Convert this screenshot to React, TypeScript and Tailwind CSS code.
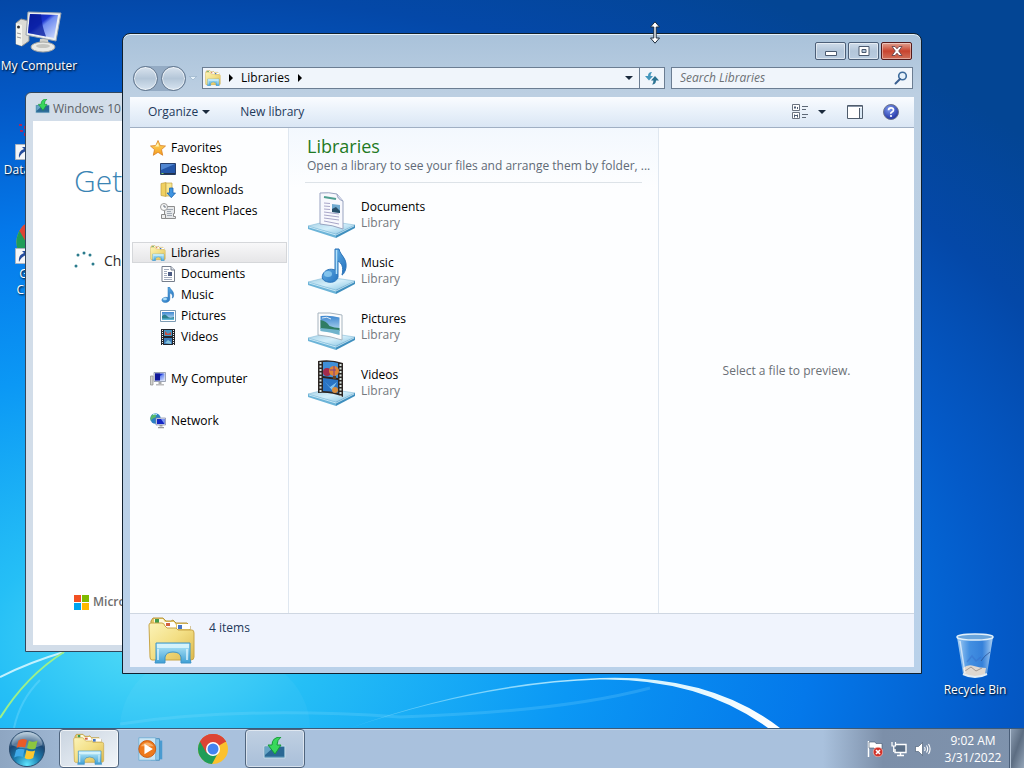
import { useState } from "react";
import type { ReactNode } from "react";

type IconProps = { className?: string };

// Shared gradients, referenced by id from the icons below
const Gradients = () => (
  <svg className="absolute w-0 h-0" aria-hidden="true">
    <defs>
      <linearGradient id="folder" x1="0" y1="0" x2="1" y2="1">
        <stop offset="0" stopColor="#fbf3b8" />
        <stop offset="0.5" stopColor="#f3df85" />
        <stop offset="1" stopColor="#dcb84c" />
      </linearGradient>
      <linearGradient id="stand" x1="0" y1="0" x2="0" y2="1">
        <stop offset="0" stopColor="#b9ecfb" />
        <stop offset="1" stopColor="#3f9fd4" />
      </linearGradient>
      <linearGradient id="tray" x1="0" y1="0" x2="1" y2="1">
        <stop offset="0" stopColor="#a2cfe4" />
        <stop offset="0.5" stopColor="#d3eefa" />
        <stop offset="1" stopColor="#7fbfdf" />
      </linearGradient>
      <linearGradient id="screen" x1="0" y1="0" x2="1" y2="1">
        <stop offset="0" stopColor="#0a1a9a" />
        <stop offset="0.4" stopColor="#1b35d0" />
        <stop offset="0.5" stopColor="#6f8cf0" />
        <stop offset="1" stopColor="#d4e0ff" />
      </linearGradient>
      <linearGradient id="note" x1="0" y1="0" x2="1" y2="1">
        <stop offset="0" stopColor="#7cc6f2" />
        <stop offset="1" stopColor="#1565b8" />
      </linearGradient>
      <linearGradient id="sky" x1="0" y1="0" x2="0" y2="1">
        <stop offset="0" stopColor="#3c86cf" />
        <stop offset="1" stopColor="#d5eefa" />
      </linearGradient>
      <linearGradient id="star" x1="0" y1="0" x2="0" y2="1">
        <stop offset="0" stopColor="#ffe36b" />
        <stop offset="1" stopColor="#f59a1c" />
      </linearGradient>
      <linearGradient id="glass" x1="0" y1="0" x2="1" y2="0">
        <stop offset="0" stopColor="#c8e6fb" stopOpacity="0.85" />
        <stop offset="0.35" stopColor="#5ea4ea" stopOpacity="0.7" />
        <stop offset="0.7" stopColor="#4a90e0" stopOpacity="0.7" />
        <stop offset="1" stopColor="#cfe8fb" stopOpacity="0.85" />
      </linearGradient>
      <radialGradient id="orb" cx="0.5" cy="0.95" r="0.9">
        <stop offset="0" stopColor="#5fe6ff" />
        <stop offset="0.4" stopColor="#1d7fb0" />
        <stop offset="0.75" stopColor="#1a4673" />
        <stop offset="1" stopColor="#9ab6cc" />
      </radialGradient>
      <radialGradient id="help" cx="0.4" cy="0.3" r="0.8">
        <stop offset="0" stopColor="#7f9cf0" />
        <stop offset="1" stopColor="#14259a" />
      </radialGradient>
    </defs>
  </svg>
);

const LibrariesIcon = ({ className }: IconProps) => (
  <svg className={className} viewBox="0 0 48 48" aria-hidden="true">
    <path d="M3 5 5 2h10l3 3h5l2-1 3 3h11l3 3v33H3z" fill="#e3c766" stroke="#b8963c" />
    <path d="M6 3h9l2 3v6H6z" fill="#fdf9dc" />
    <path d="M7 3h4v4H7z" fill="#3f9a4c" />
    <path d="M17 6h9l2 3v5H17z" fill="#fff" />
    <path d="M18 7h4v3h-4z" fill="#d2603d" />
    <path d="M29 8h13v5H29z" fill="#fff" />
    <path d="M30 9h4v4h-4z" fill="#4474c4" />
    <path d="M1 9q0-2 2-2h11q2 0 3 3l2 2h9l2 2h14q2 0 2 3v24q0 3-3 3H4q-2 0-2-3z" fill="url(#folder)" stroke="#c9a649" />
    <path d="M8 27h34v16l1 4H33v-6q-1-5-8-5t-8 5v6H7l1-4z" fill="url(#stand)" stroke="#3d93c8" />
    <path d="M9 28h32v4H9z" fill="#dff6fd" opacity="0.8" />
    <path d="M10 33v11M39 33v11" stroke="#e2f7ff" strokeWidth="2" opacity="0.7" />
  </svg>
);

const MonitorIcon = ({ className }: IconProps) => (
  <svg className={className} viewBox="0 0 48 48" aria-hidden="true">
    <path d="M1 15 6 11l8 2v20l-7 5-6-2z" fill="#dcdcd6" stroke="#8e9090" />
    <path d="M1 15l6 2v21l-6-2z" fill="#f4f4ee" />
    <circle cx="3.500" cy="19" r="1.500" fill="#333" />
    <path d="M2 25l4 1M2 29l4 1" stroke="#999" />
    <path d="M25 31h8l1 8H24z" fill="#cfcfcb" />
    <ellipse cx="28" cy="39" rx="12" ry="5" fill="#e9e9e6" stroke="#a4a4a0" />
    <ellipse cx="28" cy="38" rx="7" ry="2" fill="#c4c4c0" />
    <path d="M13 4 46 5l-5 28-30-6z" fill="#eceff2" stroke="#9aa4ae" />
    <path d="M15 6 43 7l-4 23-26-5z" fill="url(#screen)" />
    <path d="M15 6l11 .500q1 12 5 22l-18-3.500z" fill="#071c9c" opacity="0.75" />
  </svg>
);

const DocumentIcon = ({ className }: IconProps) => (
  <svg className={className} viewBox="0 0 16 16" aria-hidden="true">
    <path d="M2 .5h9L14.500 4v11.500H2z" fill="#fff" stroke="#767e8c" />
    <path d="M11 .5V4h3.500" fill="#dde3ec" stroke="#767e8c" />
    <path d="M4 3.500h5M4 5.500h3M4 7.500h3M4 9.500h3M4 11.500h8M4 13.500h8" stroke="#a3acbd" />
    <path d="M8 6h4v4H8z" fill="#4c5c84" />
  </svg>
);

const MusicIcon = ({ className }: IconProps) => (
  <svg className={className} viewBox="0 0 16 16" aria-hidden="true">
    <path d="M8 0h1.500c1 3 5 4 4 9.500-.2 1-.8 1.500-1.200 1.500 1-3-.8-4.500-2.500-5V12c0 2-2 3.500-4.500 3.500S1.500 14 2 12.500 4.500 9.800 8 10.500z" fill="url(#note)" stroke="#1f6eb5" strokeWidth="0.5" />
    <ellipse cx="5" cy="12" rx="2" ry="1.200" fill="#a9dcf8" />
  </svg>
);

const PicturesIcon = ({ className }: IconProps) => (
  <svg className={className} viewBox="0 0 16 16" aria-hidden="true">
    <path d="M.5 2.500h15v11H.5z" fill="#fff" stroke="#7c9bb3" />
    <path d="M2 4h12v8H2z" fill="url(#sky)" />
    <path d="M2 8q3-3 5 0t7 1v3H2z" fill="#2b7f8c" />
    <path d="M2 10.500h12V12H2z" fill="#5fb6d8" />
  </svg>
);

const VideosIcon = ({ className }: IconProps) => (
  <svg className={className} viewBox="0 0 16 16" aria-hidden="true">
    <path d="M1 0h14v16H1z" fill="#23262c" />
    <path d="M4 1h8v6H4z" fill="#4596c4" />
    <path d="M4 9h8v6H4z" fill="#3c7cb8" />
    <path d="M5 2l3 3 3-2v3H5z" fill="#c65145" />
    <path d="M5 14l3-3 3 2v2z" fill="#88c6de" />
    <path d="M2.500 1v15M13.500 1v15" stroke="#f3f3f3" strokeDasharray="1 1" />
  </svg>
);

const ComputerSmallIcon = ({ className }: IconProps) => (
  <svg className={className} viewBox="0 0 16 16" aria-hidden="true">
    <path d="M.5 5h2.500v9H.5z" fill="#d4d4d0" stroke="#8b8b88" strokeWidth="0.7" />
    <path d="M4 1.500h11.500v9H4z" fill="#e3e6ee" stroke="#8890a4" strokeWidth="0.8" />
    <path d="M5 2.500h9.500V9.500H5z" fill="url(#screen)" />
    <path d="M5 2.500h5V9.500H5z" fill="#10179a" />
    <path d="M8.500 11h3v2h-3z" fill="#aaa" />
    <path d="M6 13h8v1.500H6z" fill="#bcbcbc" />
  </svg>
);

const NetworkIcon = ({ className }: IconProps) => (
  <svg className={className} viewBox="0 0 16 16" aria-hidden="true">
    <circle cx="5.500" cy="5.500" r="5.200" fill="#2c7fc4" />
    <path d="M2 2q3-2 4 0t-2 3-3 3Q-.5 5 2 2zM6 6q2-1 3 1l-3 3z" fill="#57b96a" />
    <path d="M3 1.500q2-1 4 0" stroke="#c2ecfa" fill="none" />
    <path d="M6 5h9.500v7H6z" fill="#dde2f2" stroke="#7c84a4" strokeWidth="0.7" />
    <path d="M7 6h7.500v5H7z" fill="#1426c4" />
    <path d="M11 6h3.500v5z" fill="#7d98f4" />
    <path d="M9.500 12h3v1.500h-3zM8 14h6v1.200H8z" fill="#9a9a9a" />
  </svg>
);

const StarIcon = ({ className }: IconProps) => (
  <svg className={className} viewBox="0 0 16 16" aria-hidden="true">
    <path d="M8 .5l2.200 5 5.300.5-4 3.600 1.200 5.700L8 12.300l-4.700 3 1.200-5.700-4-3.600 5.300-.5z" fill="url(#star)" stroke="#d98224" strokeWidth="0.8" />
    <path d="M8 3l1 3.500H5z" fill="#fff5b8" />
  </svg>
);

const DesktopIcon = ({ className }: IconProps) => (
  <svg className={className} viewBox="0 0 16 16" aria-hidden="true">
    <path d="M.5 2.500h15v11H.5z" fill="#2456a8" stroke="#28406c" />
    <path d="M1 3h14L1 9z" fill="#5c94dc" opacity="0.8" />
    <path d="M1 12h14v1.500H1z" fill="#24344c" />
    <path d="M1.500 12h2v1h-2z" fill="#7fd46c" />
  </svg>
);

const DownloadsIcon = ({ className }: IconProps) => (
  <svg className={className} viewBox="0 0 16 16" aria-hidden="true">
    <path d="M1 1.500 6 .5v14L1 13.500z" fill="#f0d060" stroke="#c3a043" strokeWidth="0.7" />
    <path d="M6 1h6v13H6z" fill="#f8e690" stroke="#c3a043" strokeWidth="0.7" />
    <path d="M9.500 6h3.500v5h2.500l-4.200 4.700L7 11h2.500z" fill="#3f94e0" stroke="#1d64b0" strokeWidth="0.8" />
  </svg>
);

const RecentIcon = ({ className }: IconProps) => (
  <svg className={className} viewBox="0 0 16 16" aria-hidden="true">
    <path d="M4.500 3.500h10v7h-1v3h2v2h-11z" fill="#e6e8ea" stroke="#8d8d8d" />
    <path d="M7 6.500h6M7 8.500h4M7 10.500h5M7 12.500h5" stroke="#a0a8b2" />
    <circle cx="4" cy="4" r="3.500" fill="#fafafa" stroke="#9b9b9b" />
    <path d="M4 2v2h2" stroke="#4a5566" fill="none" strokeWidth="0.8" />
    <path d="M1.500 11.500h4v4h-4z" fill="#ededed" stroke="#8a8a8a" />
  </svg>
);

// Glass plate under each of the large library icons
const Tray = () => (
  <>
    <path d="M0 35 20 30l27 4-19 9z" fill="url(#tray)" stroke="#86bcd8" strokeWidth="0.6" />
    <path d="M0 35l28 8v4L0 38z" fill="#6cb4d8" />
    <path d="M28 43l19-9v3l-19 10z" fill="#3f8fbe" />
    <path d="M1 36l27 8 18-9" stroke="#dff4fc" fill="none" strokeWidth="0.8" />
  </>
);

const DocumentsLarge = ({ className }: IconProps) => (
  <svg className={className} viewBox="0 0 48 48" aria-hidden="true">
    <Tray />
    <path d="M12 2q9-1 17 1l6 7v28q-10-4-23-5z" fill="#f7f8fd" stroke="#98a3c0" />
    <path d="M29 3q0 5 6 7" fill="#d6dcee" stroke="#98a3c0" />
    <path d="M16 6l12 2" stroke="#4f9f90" strokeWidth="2" />
    <path d="M16 12l6 .5M16 15l6 .5M16 18l6 .5M16 21l15 2M16 24l15 2M16 27l15 2M16 30l15 3" stroke="#a8a6c8" />
    <path d="M24 13l8 1v8l-8-1z" fill="#6fa9cf" />
    <path d="M24 18l4-2 4 4v2l-8-1z" fill="#274e68" />
  </svg>
);

const MusicLarge = ({ className }: IconProps) => (
  <svg className={className} viewBox="0 0 48 48" aria-hidden="true">
    <Tray />
    <path d="M27 2h4c1 6 8 9 7 18-.3 4-3 8-4 8 2-8-.5-12-4-14v16c-1 4-5 6-10 5s-7-4-5-8 7-6 12-4z" fill="url(#note)" stroke="#2a73b8" />
    <path d="M28.500 3v24" stroke="#b4e2fa" strokeWidth="1.500" />
    <ellipse cx="20" cy="27" rx="4" ry="3" fill="#9ad6f6" opacity="0.7" />
  </svg>
);

const PicturesLarge = ({ className }: IconProps) => (
  <svg className={className} viewBox="0 0 48 48" aria-hidden="true">
    <Tray />
    <path d="M10 10q12-1 24 2v25q-12-4-24-5z" fill="#fdfdfd" stroke="#a6b4bf" />
    <path d="M12.500 13q10-1 19 1.500V32q-9-3-19-4z" fill="url(#sky)" />
    <path d="M12.500 17q6 1 9 6 5 2 10 2v3l-19-2z" fill="#2f7d64" />
    <path d="M12.500 25l19 2v5q-9-3-19-4z" fill="#6fb3cb" />
    <path d="M14 15q5-2 9 1" stroke="#fff" fill="none" opacity="0.8" />
  </svg>
);

const VideosLarge = ({ className }: IconProps) => (
  <svg className={className} viewBox="0 0 48 48" aria-hidden="true">
    <Tray />
    <path d="M10 2q13-2 25 2v34q-12-5-25-4z" fill="#2c2624" />
    <path d="M15 3q8-1 15 1v15l-15-2z" fill="#3f8fd8" />
    <path d="M15 19l15 2v13q-8-2-15-2z" fill="#2a74c4" />
    <circle cx="19" cy="13" r="4" fill="#a32c4c" />
    <circle cx="26" cy="12" r="5" fill="#e08434" />
    <path d="M22 11h6M26 7v10" stroke="#7c3c8c" />
    <path d="M25 17h3v3h-3z" fill="#63411f" />
    <path d="M16 22l6 6 7-5-5 8z" fill="#84c4f0" />
    <circle cx="27" cy="31" r="3" fill="#d88c3c" />
    <path d="M12.500 3v31M32.500 5v33" stroke="#d8e4de" strokeWidth="2" strokeDasharray="2 1.500" />
  </svg>
);

const InstallerIcon = ({ className }: IconProps) => (
  <svg className={className} viewBox="0 0 24 24" aria-hidden="true">
    <path d="M1 9h21v12H1z" fill="#3f7ea6" stroke="#c3dbe8" />
    <path d="M2 10h19v9H2z" fill="#2a6894" />
    <path d="M2 10h9L2 18z" fill="#67a5c6" />
    <path d="M18 0q-9 0-9 8H5l7 9 6-9h-4q0-5 4-8z" fill="#39d85c" stroke="#169a38" />
  </svg>
);

const ChromeIcon = ({ className }: IconProps) => (
  <svg className={className} viewBox="0 0 32 32" aria-hidden="true">
    <circle cx="16" cy="16" r="15" fill="#fbc12d" />
    <path d="M16 16 3 8.500A15 15 0 0 1 29 8.500z" fill="#dc4434" />
    <path d="M3 8.500A15 15 0 0 0 15 31l6.500-12L16 16z" fill="#1f9d58" />
    <path d="M3 8.500 9.500 20 16 9h13.200L29 8.500A15 15 0 0 0 3 8.500z" fill="#dc4434" />
    <circle cx="16" cy="16" r="7" fill="#fff" />
    <circle cx="16" cy="16" r="5.500" fill="#4384f0" />
  </svg>
);

const MediaPlayerIcon = ({ className }: IconProps) => (
  <svg className={className} viewBox="0 0 32 32" aria-hidden="true">
    <path d="M20 7h8v20h-8z" fill="#4a9bd0" />
    <path d="M16 5h9v23h-9z" fill="#8cc8ea" stroke="#4a90bd" />
    <path d="M3 4h18v24H3z" fill="#c9e6f5" stroke="#76b0d4" />
    <circle cx="12" cy="16" r="9" fill="#ee7a1c" stroke="#c85a10" />
    <path d="M5 13q7-8 14 0z" fill="#f9ad66" />
    <path d="M9 10.500v11l9-5.500z" fill="#fff" />
  </svg>
);

const StartOrb = ({ className }: IconProps) => (
  <svg className={className} viewBox="0 0 40 40" aria-hidden="true">
    <circle cx="20" cy="20" r="18.500" fill="url(#orb)" stroke="#28496a" />
    <path d="M4 16a16 14 0 0 1 32 0q-16 7-32 0z" fill="#fff" opacity="0.28" />
    <path d="M11 11q4-3 9-.5l-2 8q-5-2-9 .5z" fill="#ea5b28" />
    <path d="M22 11q4 2.500 9 0l-2 8.500q-5 2-9-.5z" fill="#8dc63f" />
    <path d="M8.500 21q4-2.500 9-.5l-2 8q-4-2-9 .5z" fill="#3fa9e8" />
    <path d="M19.500 21q4 2.500 9 .5l-2 8q-5 2.500-9 0z" fill="#fdc82f" />
  </svg>
);

const RecycleBinIcon = ({ className }: IconProps) => (
  <svg className={className} viewBox="0 0 48 48" aria-hidden="true">
    <path d="M6 5h36l-6 37q-12 6-24 0z" fill="url(#glass)" />
    <path d="M12 36q5-4 11-2t12 2l-1 6q-10 5-21 0z" fill="#e0d8d0" />
    <path d="M14 39l6-4 5 4 6-3" stroke="#a49a92" fill="none" />
    <path d="M12 42q12 6 24 0" stroke="#e4eef6" fill="none" strokeWidth="2" />
    <path d="M16 30l5-6 4 5 5-4" stroke="#3468c8" fill="none" strokeWidth="1.500" opacity="0.4" />
    <path d="M39 20q-6 4-9 9" stroke="#274c8c" fill="none" opacity="0.7" />
    <ellipse cx="24" cy="5" rx="18" ry="3" fill="#6aa5dc" stroke="#e2f0fa" strokeWidth="1.500" />
    <path d="M9 9l5 32" stroke="#fff" strokeWidth="1.500" opacity="0.6" />
  </svg>
);

const ShortcutArrow = ({ className }: IconProps) => (
  <svg className={className} viewBox="0 0 16 16" aria-hidden="true">
    <path d="M.5.5h15v15H.5z" fill="#f4f6f8" stroke="#aab4c0" />
    <path d="M4 14q-1-7 5-9L7 3h6v6l-2-2q-5 2-7 7z" fill="#234c9c" />
  </svg>
);

const ArrowRight = () => (
  <svg className="w-1 h-2" viewBox="0 0 4 8" aria-hidden="true">
    <path d="M0 0l4 4-4 4z" fill="#000" />
  </svg>
);

const ArrowDown = () => (
  <svg className="w-2 h-1" viewBox="0 0 8 4" aria-hidden="true">
    <path d="M0 0h8L4 4z" fill="#1a2a3c" />
  </svg>
);

const NAV_GROUPS = [
  {
    name: "Favorites",
    icon: StarIcon,
    items: [
      { name: "Desktop", icon: DesktopIcon },
      { name: "Downloads", icon: DownloadsIcon },
      { name: "Recent Places", icon: RecentIcon },
    ],
  },
  {
    name: "Libraries",
    icon: LibrariesIcon,
    items: [
      { name: "Documents", icon: DocumentIcon },
      { name: "Music", icon: MusicIcon },
      { name: "Pictures", icon: PicturesIcon },
      { name: "Videos", icon: VideosIcon },
    ],
  },
  { name: "My Computer", icon: ComputerSmallIcon, items: [] },
  { name: "Network", icon: NetworkIcon, items: [] },
];

const LIBRARIES = [
  { name: "Documents", icon: DocumentsLarge },
  { name: "Music", icon: MusicLarge },
  { name: "Pictures", icon: PicturesLarge },
  { name: "Videos", icon: VideosLarge },
];

const Wallpaper = () => (
  <svg
    className="absolute inset-0 w-full h-full"
    viewBox="0 0 1024 728"
    preserveAspectRatio="none"
    aria-hidden="true"
  >
    <defs>
      <radialGradient
        id="wall"
        gradientUnits="userSpaceOnUse"
        cx="0"
        cy="0"
        r="1"
        gradientTransform="translate(150 640) scale(1180 750)"
      >
        <stop offset="0" stopColor="#52dcf6" />
        <stop offset="0.14" stopColor="#25bff6" />
        <stop offset="0.36" stopColor="#0b98f5" />
        <stop offset="0.56" stopColor="#0478ea" />
        <stop offset="0.72" stopColor="#045ac8" />
        <stop offset="0.86" stopColor="#0448a8" />
        <stop offset="1" stopColor="#034594" />
      </radialGradient>
      <linearGradient id="arc" x1="0" y1="0" x2="1" y2="0">
        <stop offset="0" stopColor="#9fe8ff" stopOpacity="0.3" />
        <stop offset="0.6" stopColor="#c8f0ff" />
        <stop offset="1" stopColor="#fff" />
      </linearGradient>
    </defs>
    <rect width="1024" height="728" fill="url(#wall)" />
    <path d="M120 728a95 80 0 0 1 190 0z" fill="#fff" opacity="0.04" />
    <path d="M350 728Q480 682 600 678 Q710 674 780 728h-12Q700 678 600 679.500 480 684 350 728z" fill="url(#arc)" />
    <path d="M120 724Q240 706 400 717 560 712 650 688" stroke="#8fe0ff" strokeWidth="3" fill="none" opacity="0.2" />
    <path d="M0 677Q30 662 64 652" stroke="#d4f6ff" strokeWidth="2" fill="none" opacity="0.9" />
    <path d="M0 718Q26 676 64 652" stroke="#9cf08a" strokeWidth="2" fill="none" />
    <path d="M14 728Q20 700 40 680" stroke="#8fe4ff" strokeWidth="2" fill="none" opacity="0.3" />
  </svg>
);

const DesktopLabel = ({ children }: { children: ReactNode }) => (
  <span className="self-start min-w-full text-center leading-4 text-white [text-shadow:1px_1px_2px_#000]">
    {children}
  </span>
);

const InstallerWindow = () => (
  <section
    aria-label="Windows 10"
    className="absolute left-[25px] top-[92px] bottom-[76px] w-96 flex flex-col rounded-t-md border border-[#33475c] bg-[#d2dde9] px-[7px] pb-1.5"
  >
    <header className="flex items-center gap-0.5 h-7 pl-0.5 text-[#5a6066]">
      <InstallerIcon className="w-4 h-4" />
      <span className="mt-1">Windows 10</span>
    </header>
    <div className="flex-1 flex flex-col bg-white pl-[41px]">
      <h1 className="mt-10 text-[30px] leading-10 font-light text-[#3a84b4]">Getting</h1>
      <div className="flex items-center gap-2 mt-[50px] text-[14px] leading-5 text-[#2b2b2b]">
        <svg className="w-[22px] h-5" viewBox="0 0 22 20" aria-hidden="true">
          <g fill="#2b7b8c">
            <circle cx="2" cy="15" r="1.500" />
            <circle cx="4" cy="4" r="1.500" />
            <circle cx="10" cy="2" r="1.500" />
            <circle cx="16" cy="4" r="1.500" />
            <circle cx="19" cy="13" r="1.500" />
          </g>
        </svg>
        <span>Checking</span>
      </div>
      <div className="flex items-center gap-1 mt-auto mb-[33px] h-5 font-semibold text-[#6e6e6e]">
        <svg className="w-[15px] h-[15px]" viewBox="0 0 15 15" aria-hidden="true">
          <path d="M0 0h7v7H0z" fill="#f25022" />
          <path d="M8 0h7v7H8z" fill="#7fba00" />
          <path d="M0 8h7v7H0z" fill="#00a4ef" />
          <path d="M8 8h7v7H8z" fill="#ffb900" />
        </svg>
        <span>Microsoft</span>
      </div>
    </div>
  </section>
);

const captionButton =
  "flex items-center justify-center w-[31px] h-[18px] rounded-xs border border-[#4c5f78] bg-linear-to-b from-[#cfdcea] via-[#b3c6da] via-50% to-[#b9cce0] shadow-[inset_0_0_0_1px_rgba(255,255,255,0.5)]";

const navButton =
  "w-[25px] h-[25px] rounded-full border border-[#62778f] bg-linear-to-b from-[#d9e3ee] via-[#b4c6d8] to-[#d7e4f0] shadow-[inset_0_0_0_1px_rgba(255,255,255,0.6)]";

const ExplorerWindow = () => {
  const [search, setSearch] = useState("");
  const [selected, setSelected] = useState("Libraries");

  return (
    <section
      aria-label="Libraries"
      className="absolute left-[122px] right-[102px] top-[33px] bottom-[54px] flex flex-col rounded-t-lg border border-[#10202e] bg-linear-to-b from-[#a9c2da] via-[#bccfe2] via-[60px] to-[#b9d1ea] px-[7px] pb-1.5 shadow-[inset_0_1px_0_#e6f2fa]"
    >
      <header className="flex justify-end gap-[2px] h-[33px] pt-2 pr-0.5">
        <button className={captionButton} aria-label="Minimize">
          <svg className="w-3 h-2 mt-1" viewBox="0 0 12 8">
            <path d="M.5 2.500h11v4H.5z" fill="#fff" stroke="#4a5a70" />
          </svg>
        </button>
        <button className={captionButton} aria-label="Maximize">
          <svg className="w-3 h-2.5" viewBox="0 0 12 10">
            <path d="M1 .5h10v9H1z" fill="#fff" stroke="#4a5a70" />
            <path d="M4 3.500h4v3H4z" fill="#b3c6da" stroke="#4a5a70" />
          </svg>
        </button>
        <button
          className="flex items-center justify-center w-[31px] h-[18px] rounded-xs border border-[#541a1a] bg-linear-to-b from-[#e0a090] via-[#c8432e] via-50% to-[#d0705a] shadow-[inset_0_0_0_1px_rgba(255,255,255,0.4)]"
          aria-label="Close"
        >
          <svg className="w-3 h-2.5" viewBox="0 0 12 10">
            <path d="M1 .5h3l2 2.300L8 .5h3L7.700 5 11 9.500H8L6 7.200 4 9.500H1L4.300 5z" fill="#fff" stroke="#5a3a42" strokeWidth="0.8" />
          </svg>
        </button>
      </header>

      <div className="flex items-center h-[22px] mb-2">
        <div className="flex items-center gap-[3px] ml-[3px] rounded-full bg-[#94abc4]">
          <button className={navButton} aria-label="Back" />
          <button className={navButton} aria-label="Forward" />
        </div>
        <button className="mx-[3px] w-2.5" aria-label="Recent pages">
          <svg className="w-2 h-1" viewBox="0 0 8 4" aria-hidden="true">
            <path d="M.5.500h7L4 4z" fill="#e6f2fa" stroke="#8fa9c2" strokeWidth="0.6" />
          </svg>
        </button>
        <nav
          aria-label="Address"
          className="flex-1 flex items-center h-[22px] border border-[#6b7d92] bg-[#f0f5fb] pl-0.5"
        >
          <LibrariesIcon className="w-4 h-4" />
          <span className="ml-2">
            <ArrowRight />
          </span>
          <a href="#libraries" className="mx-2 text-black">
            Libraries
          </a>
          <ArrowRight />
          <button className="flex items-center justify-center ml-auto w-5 h-full" aria-label="Previous locations">
            <ArrowDown />
          </button>
          <button className="flex items-center justify-center w-[25px] h-full border-l border-[#6b7d92]" aria-label="Refresh">
            <svg className="w-4 h-4" viewBox="0 0 16 16" aria-hidden="true">
              <path d="M8 2Q4 2 4 6H1l4 4.500L9 6H6.500Q6.500 4 8 2z" fill="#4497bd" />
              <path d="M8 14.500q4 0 4-4h3L11 6l-4 4.500h2.500q0 2-1.500 4z" fill="#2c7392" />
            </svg>
          </button>
        </nav>
        <div className="flex items-center w-[242px] h-[22px] ml-1.5 mr-px border border-[#6b7d92] bg-[#f0f5fb] px-1">
          <input
            type="text"
            aria-label="Search Libraries"
            value={search}
            onChange={(e) => setSearch(e.target.value)}
            placeholder="Search Libraries"
            className="flex-1 min-w-0 pl-1 italic text-[#333] outline-none placeholder:text-[#6d7175]"
          />
          <svg className="w-3.5 h-3.5" viewBox="0 0 14 14" aria-hidden="true">
            <circle cx="8.500" cy="5" r="3.800" fill="#e6f1fa" stroke="#3d6b9c" strokeWidth="1.600" />
            <path d="M6 8l-4.500 4.500" stroke="#3a5f90" strokeWidth="2" strokeLinecap="round" />
          </svg>
        </div>
      </div>

      <div className="flex items-center h-[31px] border-b border-[#a0afc3] bg-linear-to-b from-[#fafcff] via-[#e9f1fa] via-50% to-[#dae6f4] text-[#1e395b]">
        <button className="flex items-center gap-1 ml-[18px]">
          Organize <ArrowDown />
        </button>
        <button className="ml-[30px]">New library</button>
        <button className="flex items-center gap-2.5 ml-auto" aria-label="Change your view">
          <svg className="w-4 h-4" viewBox="0 0 16 16" aria-hidden="true">
            <path d="M.5.500h7v6h-7zM.5 8.500h7v6h-7z" fill="#fff" stroke="#6a7380" />
            <path d="M2 2.500h2v2H2zM5 3h1v2H5zM2 10.500h1v3H2zM3 11h2v1H3zM5 10.500h1v3H5z" fill="#4c5c74" />
            <path d="M10 2.500h6M10 5.500h4M10 10.500h6M10 13.500h4" stroke="#5d6876" />
          </svg>
          <ArrowDown />
        </button>
        <button className="ml-[21px]" aria-label="Hide the preview pane">
          <svg className="w-4 h-4" viewBox="0 0 16 16" aria-hidden="true">
            <path d="M.5 1.500h15v13H.5z" fill="#fff" stroke="#4f5c6c" />
            <path d="M1 2.500h14" stroke="#8794a6" />
            <path d="M12.500 4v10" stroke="#4f5c6c" />
            <path d="M13 4h2v10h-2z" fill="#dbe9f5" />
          </svg>
        </button>
        <button className="ml-5 mr-[15px]" aria-label="Get help">
          <svg className="w-4 h-4" viewBox="0 0 16 16" aria-hidden="true">
            <circle cx="8" cy="8" r="7.500" fill="url(#help)" stroke="#6c748c" />
            <path d="M5.500 6.200Q5.600 3.800 8 3.800t2.500 2.100Q10.500 7.200 9 8T8 9.800" stroke="#fff" strokeWidth="1.700" fill="none" />
            <circle cx="8" cy="12" r="1.100" fill="#fff" />
          </svg>
        </button>
      </div>

      <div className="flex-1 flex min-h-0 bg-[#fdfeff]">
        <nav aria-label="Folders" className="w-[159px] pt-[9px] border-r border-[#dfe7f0] text-black">
          {NAV_GROUPS.map((group) => (
            <div key={group.name} className="flex flex-col mb-[21px] pl-0.5 pr-px">
              <button
                onClick={() => setSelected(group.name)}
                className={
                  selected === group.name
                    ? "flex items-center gap-[5px] h-[21px] pl-[17px] border border-[#d5d7da] bg-linear-to-b from-[#f8f8f9] to-[#e6e6e8]"
                    : "flex items-center gap-[5px] h-[21px] pl-[17px] border border-transparent"
                }
              >
                <group.icon className="w-4 h-4" />
                {group.name}
              </button>
              {group.items.map((item) => (
                <button key={item.name} className="flex items-center gap-[5px] h-[21px] pl-7">
                  <item.icon className="w-4 h-4" />
                  {item.name}
                </button>
              ))}
            </div>
          ))}
        </nav>

        <main className="w-[370px] border-r border-[#dfe7f0] px-4 bg-linear-to-b from-[#f3f8fe] to-[#fdfeff] to-[60px]">
          <div className="pt-1.5 pb-2 pl-0.5 border-b border-[#dde3e8]">
            <h2 className="text-[18px] leading-6 text-[#1f7a24]">Libraries</h2>
            <p className="leading-4 whitespace-nowrap text-[#5f6a76]">
              Open a library to see your files and arrange them by folder, ...
            </p>
          </div>
          <ul className="mt-1">
            {LIBRARIES.map((library) => (
              <li key={library.name} className="flex items-center gap-[5px] h-14 pl-[3px]">
                <library.icon className="w-12 h-12" />
                <div className="leading-4">
                  <p className="text-black">{library.name}</p>
                  <p className="text-[#74797e]">Library</p>
                </div>
              </li>
            ))}
          </ul>
        </main>

        <aside className="flex-1 flex items-center justify-center text-[#6b7076]">
          Select a file to preview.
        </aside>
      </div>

      <footer className="flex gap-[13px] h-[54px] pl-[18px] pt-0.5 border-t border-[#cfd7e2] bg-[#f0f4fd] text-[#1e395b]">
        <LibrariesIcon className="w-12 h-12" />
        <span className="mt-1">4 items</span>
      </footer>
    </section>
  );
};

const Taskbar = () => (
  <footer className="relative flex items-stretch h-10 border-t border-[#3c5a78] bg-linear-to-r from-[#8ea6c2] via-[#a9c1dd] via-10% to-[#a9c1dd] text-white shadow-[inset_0_1px_0_#c4d6e8]">
    <button className="flex items-center justify-center w-[53px] mr-1.5" aria-label="Start">
      <StartOrb className="w-[38px] h-[38px]" />
    </button>
    <div className="flex gap-0.5">
      <button
        className="flex items-center justify-center w-[60px] rounded-sm border border-[#50657e] bg-linear-to-br from-[#c9d4e0] to-[#f2f6fa] shadow-[inset_0_0_0_1px_rgba(255,255,255,0.7)]"
        aria-label="Windows Explorer"
      >
        <LibrariesIcon className="w-[34px] h-8" />
      </button>
      <button className="flex items-center justify-center w-[60px]" aria-label="Windows Media Player">
        <MediaPlayerIcon className="w-[30px] h-[30px]" />
      </button>
      <button className="flex items-center justify-center w-[60px]" aria-label="Google Chrome">
        <ChromeIcon className="w-8 h-8" />
      </button>
      <button
        className="flex items-center justify-center w-[60px] rounded-sm border border-[#50657e] bg-linear-to-b from-[#c0d0e2] to-[#a9bfd9] shadow-[inset_0_0_0_1px_rgba(255,255,255,0.5)]"
        aria-label="Windows 10 setup"
      >
        <InstallerIcon className="w-6 h-6" />
      </button>
    </div>
    <div className="flex items-stretch ml-auto bg-linear-to-r from-transparent via-[#7c8fa9] via-[60px] to-[#7f93ad] pl-11">
      <div className="flex items-center gap-2 mr-1.5">
        <button aria-label="Action Center">
          <svg className="w-4 h-4" viewBox="0 0 16 16" aria-hidden="true">
            <path d="M1.500 0v16" stroke="#fff" strokeWidth="1.500" />
            <path d="M2 1h6l1 1.500h6V8H8L7 7H2z" fill="#fff" stroke="#42546c" strokeWidth="0.6" />
            <circle cx="11" cy="11" r="4.800" fill="#d2322a" stroke="#fbd0c8" strokeWidth="0.6" />
            <path d="M9 9l4 4M13 9l-4 4" stroke="#fff" strokeWidth="1.600" />
          </svg>
        </button>
        <button aria-label="Network">
          <svg className="w-4 h-4" viewBox="0 0 16 16" aria-hidden="true">
            <path d="M5 3.500h10v8H4V8" stroke="#fff" strokeWidth="1.400" fill="#5c7088" />
            <path d="M9.500 12v2M6 14.500h7" stroke="#fff" strokeWidth="1.400" />
            <path d="M1 1v4h3.500V1M2.700 5v6" stroke="#fff" strokeWidth="1.200" fill="none" />
          </svg>
        </button>
        <button aria-label="Volume">
          <svg className="w-4 h-4" viewBox="0 0 16 16" aria-hidden="true">
            <path d="M.500 5.500h3l4-4v13l-4-4h-3z" fill="#fff" stroke="#42546c" strokeWidth="0.6" />
            <path d="M9.500 6q1.300 2 0 4M11.500 4.500q2.300 3.500 0 7M13.500 3q3.200 5 0 10" stroke="#fff" fill="none" strokeWidth="1.100" />
          </svg>
        </button>
      </div>
      <time className="flex flex-col justify-center w-[72px] text-center leading-[17px]">
        <span>9:02 AM</span>
        <span>3/31/2022</span>
      </time>
      <button
        className="w-[15px] border-l border-[#4a5e78] bg-linear-to-br from-[#8fa0b4] via-[#5c6d82] to-[#95a6b9] shadow-[inset_1px_0_0_#b4c4d6]"
        aria-label="Show desktop"
      />
    </div>
  </footer>
);

const App = () => (
  <div className="flex flex-col h-screen overflow-hidden font-['Open_Sans','Noto_Sans',sans-serif] text-[12px] leading-4 select-none">
    <Gradients />
    <div className="relative flex-1 overflow-hidden">
      <Wallpaper />

      <div className="absolute left-0 top-2 w-[78px] flex flex-col items-center gap-0.5">
        <MonitorIcon className="w-12 h-12" />
        <DesktopLabel>My Computer</DesktopLabel>
      </div>
      <div className="absolute left-[3px] top-[112px] w-7 flex flex-col gap-0.5">
        <svg className="w-12 h-12 ml-3" viewBox="0 0 48 48" aria-hidden="true">
          <path d="M4 12h3v2H4zM9 14h3v3H9zM5 18h3v2H5zM9 21h3v3H9z" fill="#a8285c" />
          <path d="M14 8h30v32H14z" fill="#7c2c6c" />
        </svg>
        <ShortcutArrow className="absolute left-3 top-8 w-4 h-4" />
        <DesktopLabel>Data</DesktopLabel>
      </div>
      <div className="absolute left-0 top-[218px] w-[78px] flex flex-col items-center">
        <ChromeIcon className="w-12 h-12" />
        <ShortcutArrow className="absolute left-[15px] top-[30px] w-4 h-4" />
        <DesktopLabel>
          Google
          <br />
          Chrome
        </DesktopLabel>
      </div>
      <div className="absolute right-2.5 bottom-[30px] w-[78px] flex flex-col items-center gap-0.5">
        <RecycleBinIcon className="w-12 h-12" />
        <DesktopLabel>Recycle Bin</DesktopLabel>
      </div>

      <InstallerWindow />
      <ExplorerWindow />

      {/* vertical resize pointer */}
      <svg className="absolute left-[649px] top-[21px] w-3 h-[23px]" viewBox="0 0 12 23" aria-hidden="true">
        <path d="M6 .800 10.500 6H7.200v11h3.300L6 22.200 1.500 17h3.300V6H1.500z" fill="#fff" stroke="#1a2a3c" />
      </svg>
    </div>
    <Taskbar />
  </div>
);

export default App;
